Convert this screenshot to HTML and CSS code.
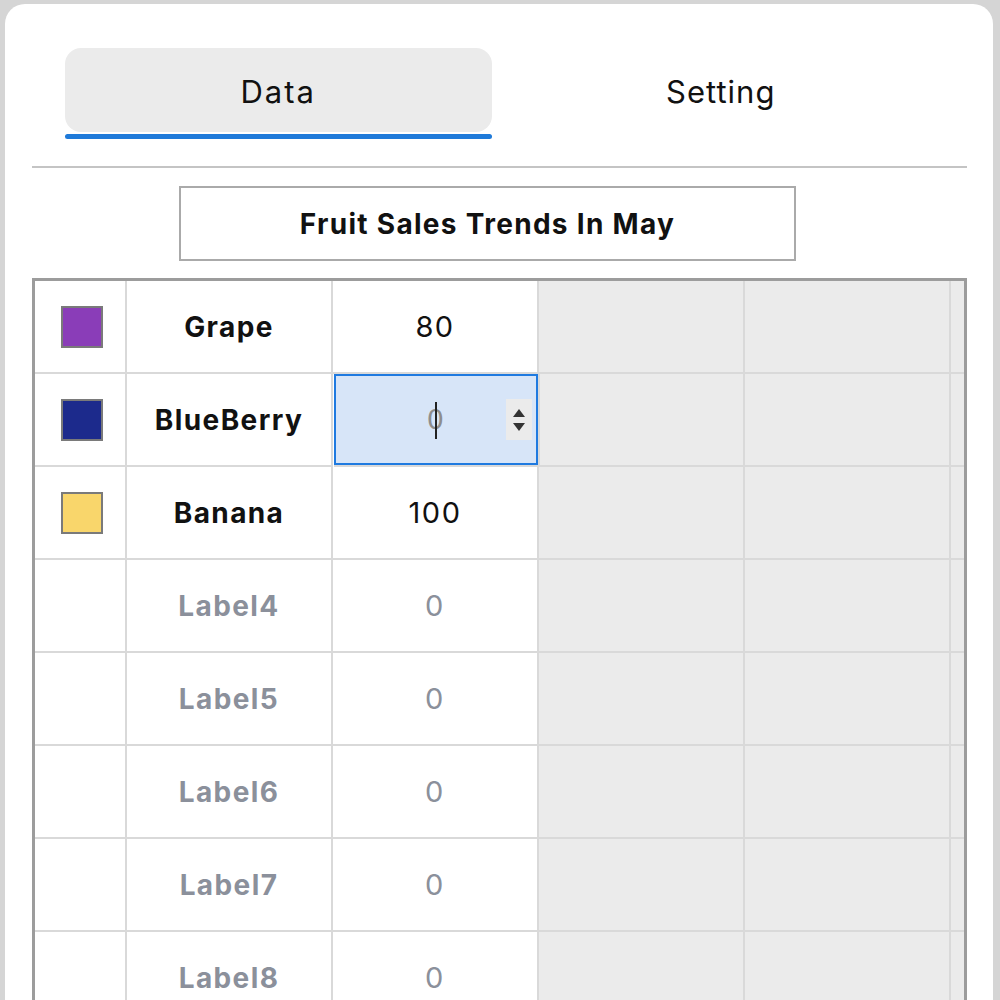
FILE: index.html
```html
<!DOCTYPE html>
<html lang="en">
<head>
    <meta charset="UTF-8">
    <meta name="viewport" content="width=device-width, initial-scale=1.0">
    <title>Chart Data</title>
    <link rel="stylesheet" href="styles.css">
</head>
<body>
    <div class="panel">
        <div class="tabs">
            <div class="tab active">
                <div class="tab-label">Data</div>
                <div class="tab-bar"></div>
            </div>
            <div class="tab">
                <div class="tab-label">Setting</div>
                <div class="tab-bar"></div>
            </div>
        </div>
        <div class="divider"></div>
        <div class="chart-title">Fruit Sales Trends In May</div>

        <div class="sheet">
            <div class="grid">
                <div class="cell"><span class="swatch grape"></span></div>
                <div class="cell label">Grape</div>
                <div class="cell value">80</div>
                <div class="cell blank"></div>
                <div class="cell blank"></div>
                <div class="cell blank"></div>

                <div class="cell"><span class="swatch blueberry"></span></div>
                <div class="cell label">BlueBerry</div>
                <div class="cell value editing">
                    <span class="typed">0</span>
                    <span class="spinner">
                        <span class="arrow up"></span>
                        <span class="arrow down"></span>
                    </span>
                </div>
                <div class="cell blank"></div>
                <div class="cell blank"></div>
                <div class="cell blank"></div>

                <div class="cell"><span class="swatch banana"></span></div>
                <div class="cell label">Banana</div>
                <div class="cell value">100</div>
                <div class="cell blank"></div>
                <div class="cell blank"></div>
                <div class="cell blank"></div>

                <div class="cell"></div>
                <div class="cell label muted">Label4</div>
                <div class="cell value muted">0</div>
                <div class="cell blank"></div>
                <div class="cell blank"></div>
                <div class="cell blank"></div>

                <div class="cell"></div>
                <div class="cell label muted">Label5</div>
                <div class="cell value muted">0</div>
                <div class="cell blank"></div>
                <div class="cell blank"></div>
                <div class="cell blank"></div>

                <div class="cell"></div>
                <div class="cell label muted">Label6</div>
                <div class="cell value muted">0</div>
                <div class="cell blank"></div>
                <div class="cell blank"></div>
                <div class="cell blank"></div>

                <div class="cell"></div>
                <div class="cell label muted">Label7</div>
                <div class="cell value muted">0</div>
                <div class="cell blank"></div>
                <div class="cell blank"></div>
                <div class="cell blank"></div>

                <div class="cell"></div>
                <div class="cell label muted">Label8</div>
                <div class="cell value muted">0</div>
                <div class="cell blank"></div>
                <div class="cell blank"></div>
                <div class="cell blank"></div>
            </div>
        </div>
    </div>
</body>
</html>
```

FILE: styles.css
```css
* {
    box-sizing: border-box;
}

html, body {
    height: 100%;
}

body {
    margin: 0;
    padding: 0;
    background: #d5d5d5;
    font-family: 'Inter', 'Lato', sans-serif;
    color: #111;
    overflow: hidden;
}

.panel {
    margin: 4px 7px 0 5px;
    min-height: 1100px;
    background: #ffffff;
    border-radius: 20px 20px 0 0;
    padding: 44px 26px 0 27px;
}

.tabs {
    display: flex;
    gap: 16px;
    padding: 0 33px;
}

.tab {
    flex: 1;
}

.tab-label {
    height: 84px;
    display: flex;
    justify-content: center;
    align-items: center;
    font-size: 31px;
    letter-spacing: 1px;
    border-radius: 16px;
    padding-top: 2px;
}

.tab.active .tab-label {
    letter-spacing: 2px;
}

.tab-bar {
    height: 5px;
    margin-top: 2px;
    border-radius: 3px;
}

.tab.active .tab-label {
    background: #ebebeb;
}

.tab.active .tab-bar {
    background: #1f7ad9;
}

.divider {
    height: 2px;
    margin-top: 27px;
    background: #c4c4c4;
}

.chart-title {
    width: 617px;
    height: 75px;
    margin: 18px 0 0 147px;
    border: 2px solid #aaaaaa;
    display: flex;
    justify-content: center;
    align-items: center;
    font-size: 28px;
    font-weight: bold;
    letter-spacing: 1.3px;
}

.sheet {
    margin-top: 17px;
    width: 935px;
    border: 3px solid #9c9c9c;
    border-bottom: none;
    overflow: hidden;
}

.grid {
    display: grid;
    grid-template-columns: 92px repeat(5, 206px);
    grid-auto-rows: 93px;
    width: 1122px;
}

.cell {
    border-right: 2px solid #d9d9d9;
    border-bottom: 2px solid #d9d9d9;
    display: flex;
    justify-content: center;
    align-items: center;
    font-size: 28px;
    background: #ffffff;
}

.cell.blank {
    background: #ebebeb;
}

.label {
    font-weight: bold;
    letter-spacing: 1.4px;
}

.value {
    font-size: 29px;
    letter-spacing: 1.5px;
}

.muted {
    color: #8b909b;
}

.swatch {
    width: 42px;
    height: 42px;
    border: 2px solid #7a7a7a;
    margin-left: 4px;
}

.swatch.grape {
    background: #8a3db8;
}

.swatch.blueberry {
    background: #1c2a8c;
}

.swatch.banana {
    background: #f9d66b;
}

.value.editing {
    position: relative;
    background: #d7e5f8;
    box-shadow: inset 0 0 0 2px #1f7ae0;
    margin: 0 -1px 0 1px;
}

.typed {
    position: relative;
    font-family: 'DejaVu Sans', sans-serif;
    font-size: 27px;
    color: #8e8e8e;
}

.typed::after {
    content: '';
    position: absolute;
    left: 45%;
    top: -2px;
    bottom: -4px;
    width: 2px;
    background: #222;
}

.spinner {
    position: absolute;
    right: 6px;
    top: 25px;
    width: 26px;
    height: 41px;
    background: #ebebeb;
    display: flex;
    flex-direction: column;
    justify-content: center;
    align-items: center;
    gap: 6px;
}

.arrow {
    width: 0;
    height: 0;
    border-left: 6px solid transparent;
    border-right: 6px solid transparent;
}

.arrow.up {
    border-bottom: 8px solid #333;
}

.arrow.down {
    border-top: 8px solid #333;
}
```
